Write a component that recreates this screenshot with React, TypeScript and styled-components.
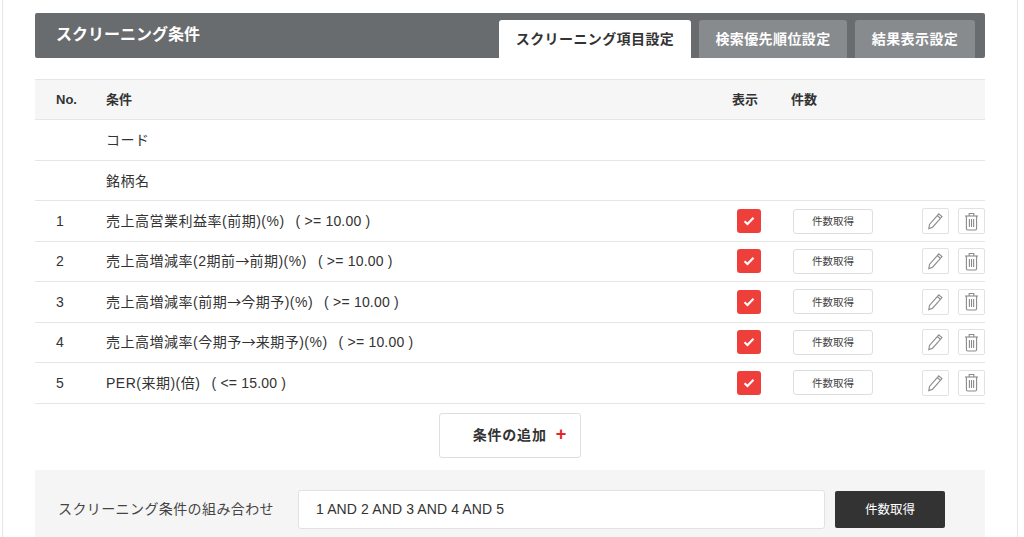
import styled, { createGlobalStyle } from 'styled-components'

const GlobalStyle = createGlobalStyle`
  html, body {
    margin: 0;
    padding: 0;
    height: 537px;
    overflow: hidden;
    background: #fff;
  }
  body {
    font-family: "Liberation Sans", "Noto Sans CJK JP", sans-serif;
    color: #333;
  }
`

const Frame = styled.div`
  box-sizing: border-box;
  width: 1016px;
  height: 537px;
  margin-left: 2px;
  padding: 13px 32px 0;
  border-left: 1px solid #e6e6e6;
  border-right: 1px solid #e6e6e6;
  overflow: hidden;
`

const TitleBar = styled.div`
  display: flex;
  justify-content: space-between;
  align-items: flex-end;
  height: 45px;
  padding: 0 10px 0 21px;
  background: #696c6f;
  border-radius: 2px;
`

const Title = styled.h2`
  align-self: flex-start;
  margin: 11px 0 0;
  font-size: 16px;
  line-height: 22px;
  font-weight: 700;
  color: #fff;
`

const Tabs = styled.div`
  display: flex;
  gap: 8px;
`

const Tab = styled.div<{ $active?: boolean; $width: number }>`
  box-sizing: border-box;
  width: ${p => p.$width}px;
  height: 38px;
  padding-bottom: 3px;
  display: flex;
  align-items: center;
  justify-content: center;
  border-radius: 3px 3px 0 0;
  font-size: 14px;
  letter-spacing: 0.4px;
  font-weight: 700;
  background: ${p => (p.$active ? '#fff' : '#888b8e')};
  color: ${p => (p.$active ? '#333' : '#fff')};
`

const Table = styled.div`
  margin-top: 21px;
  border-top: 1px solid #e6e6e6;
`

const Row = styled.div<{ $head?: boolean }>`
  display: grid;
  grid-template-columns: 71px 609px 60px 116px 1fr;
  align-items: center;
  box-sizing: border-box;
  height: 40.45px;
  border-bottom: 1px solid #e6e6e6;
  background: ${p => (p.$head ? '#f6f6f6' : '#fff')};
`

const HeadCell = styled.div<{ $center?: boolean; $inset?: number; $latin?: boolean }>`
  padding: 0 0 ${p => (p.$latin ? 0 : 2)}px ${p => p.$inset ?? 0}px;
  text-align: ${p => (p.$center ? 'center' : 'left')};
  font-size: 13px;
  font-weight: 700;
`

const NoCell = styled.div`
  padding-left: 21px;
  font-size: 14px;
`

const ConditionCell = styled.div`
  padding-bottom: 2px;
  font-size: 14px;
  letter-spacing: 0.5px;
  white-space: nowrap;
`

const Arrow = styled.span`
  font-family: "Noto Sans CJK JP", sans-serif;
  letter-spacing: 0;
`

const Threshold = styled.span`
  margin-left: 11px;
  letter-spacing: 0.2px;
`

const CheckCell = styled.div`
  display: flex;
  justify-content: center;
  padding-left: 8px;
`

const CountCell = styled.div`
  display: flex;
  justify-content: center;
`

const Checkbox = styled.span`
  display: flex;
  align-items: center;
  justify-content: center;
  width: 24px;
  height: 24px;
  border-radius: 3px;
  background: #ee3f3a;
`

const CountButton = styled.button`
  box-sizing: border-box;
  width: 80px;
  height: 25px;
  padding: 0 0 1px;
  background: #fff;
  border: 1px solid #dedede;
  border-radius: 3px;
  font: inherit;
  font-size: 10.5px;
  color: #444;
`

const Actions = styled.div`
  display: flex;
  justify-content: flex-end;
  gap: 9px;
`

const IconButton = styled.span`
  box-sizing: border-box;
  display: flex;
  align-items: center;
  justify-content: center;
  width: 27px;
  height: 26px;
  background: #fff;
  border: 1px solid #e2e2e2;
  border-radius: 2px;
`

const AddRow = styled.div`
  display: flex;
  justify-content: center;
  margin-top: 9.6px;
`

const AddButton = styled.button`
  box-sizing: border-box;
  display: flex;
  align-items: center;
  justify-content: flex-end;
  gap: 9px;
  width: 142px;
  height: 45px;
  padding: 0 13px 4px 0;
  background: #fff;
  border: 1px solid #dedede;
  border-radius: 3px;
  font: inherit;
  font-size: 14px;
  letter-spacing: 0.8px;
  font-weight: 700;
  color: #333;
`

const Plus = styled.span`
  color: #e3262a;
  font-size: 18px;
  line-height: 18px;
`

const Footer = styled.div`
  display: flex;
  align-items: center;
  height: 78px;
  margin-top: 12px;
  padding: 0 40px 11px 23px;
  background: #f5f5f5;
`

const FooterLabel = styled.div`
  width: 240px;
  padding-bottom: 2px;
  font-size: 14px;
  letter-spacing: 0.4px;
  color: #444;
`

const Combination = styled.div`
  box-sizing: border-box;
  display: flex;
  align-items: center;
  width: 527px;
  height: 39px;
  padding: 0 17px 1px;
  background: #fff;
  border: 1px solid #e2e2e2;
  border-radius: 3px;
  font-size: 14px;
  letter-spacing: 0.12px;
`

const DarkButton = styled.button`
  width: 110px;
  height: 37px;
  margin-left: 10px;
  padding: 0 0 2px;
  background: #333;
  border: 0;
  border-radius: 2px;
  font: inherit;
  font-size: 12.5px;
  color: #fff;
`

const CheckIcon = () => (
  <svg width="12" height="10" viewBox="0 0 12 10" fill="none">
    <path d="M1.5 5.2 4.5 8 10.5 1.8" stroke="#fff" strokeWidth="2.2" />
  </svg>
)

const PencilIcon = () => (
  <svg width="17" height="18" viewBox="0 0 17 18" fill="none" stroke="#8a8a8a" strokeWidth="1.1">
    <path d="M11.8 1.8 15 4.6 5.6 15.2 1.8 16.6 2.5 12.4Z" />
    <path d="M10.3 3.5 13.5 6.3" />
  </svg>
)

const TrashIcon = () => (
  <svg width="15" height="19" viewBox="0 0 15 19" fill="none" stroke="#8a8a8a" strokeWidth="1.1">
    <path d="M1 4h13" />
    <path d="M5.2 4V1.5h4.6V4" />
    <path d="M2.4 4v12.6c0 .8.6 1.4 1.4 1.4h7.4c.8 0 1.4-.6 1.4-1.4V4" />
    <path d="M5.4 7v8M7.5 7v8M9.6 7v8" />
  </svg>
)

const conditions = [
  { before: '売上高営業利益率(前期)(%)', threshold: '( >= 10.00 )' },
  { before: '売上高増減率(2期前', after: '前期)(%)', threshold: '( >= 10.00 )' },
  { before: '売上高増減率(前期', after: '今期予)(%)', threshold: '( >= 10.00 )' },
  { before: '売上高増減率(今期予', after: '来期予)(%)', threshold: '( >= 10.00 )' },
  { before: 'PER(来期)(倍)', threshold: '( <= 15.00 )' },
]

export default function App() {
  return (
    <Frame>
      <GlobalStyle />
      <TitleBar>
        <Title>スクリーニング条件</Title>
        <Tabs>
          <Tab $active $width={192}>スクリーニング項目設定</Tab>
          <Tab $width={148}>検索優先順位設定</Tab>
          <Tab $width={120}>結果表示設定</Tab>
        </Tabs>
      </TitleBar>
      <Table>
        <Row $head>
          <HeadCell $inset={21} $latin>No.</HeadCell>
          <HeadCell>条件</HeadCell>
          <HeadCell $center>表示</HeadCell>
          <HeadCell $inset={16}>件数</HeadCell>
        </Row>
        <Row>
          <div />
          <ConditionCell>コード</ConditionCell>
        </Row>
        <Row>
          <div />
          <ConditionCell>銘柄名</ConditionCell>
        </Row>
        {conditions.map((condition, i) => (
          <Row key={i}>
            <NoCell>{i + 1}</NoCell>
            <ConditionCell>
              {condition.before}
              {condition.after && <Arrow>→</Arrow>}
              {condition.after}
              <Threshold>{condition.threshold}</Threshold>
            </ConditionCell>
            <CheckCell>
              <Checkbox><CheckIcon /></Checkbox>
            </CheckCell>
            <CountCell>
              <CountButton>件数取得</CountButton>
            </CountCell>
            <Actions>
              <IconButton><PencilIcon /></IconButton>
              <IconButton><TrashIcon /></IconButton>
            </Actions>
          </Row>
        ))}
      </Table>
      <AddRow>
        <AddButton>
          条件の追加
          <Plus>+</Plus>
        </AddButton>
      </AddRow>
      <Footer>
        <FooterLabel>スクリーニング条件の組み合わせ</FooterLabel>
        <Combination>1 AND 2 AND 3 AND 4 AND 5</Combination>
        <DarkButton>件数取得</DarkButton>
      </Footer>
    </Frame>
  )
}
